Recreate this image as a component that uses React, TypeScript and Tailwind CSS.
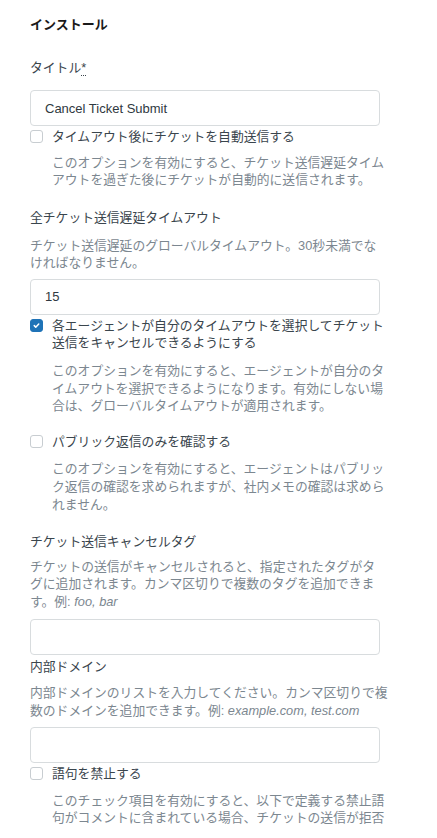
import { useState } from 'react';

const font = 'font-["Liberation_Sans","Noto_Sans_CJK_JP",sans-serif]';

function Hint({ lines, className = '' }: { lines: React.ReactNode[]; className?: string }) {
  return (
    <p className={`text-[12.8px] leading-[17.6px] text-[#7c8790] whitespace-nowrap ${className}`}>
      {lines.map((l, i) => (
        <span key={i} className="block">{l}</span>
      ))}
    </p>
  );
}

function Checkbox({ checked, onChange, lines, className = '' }: { checked: boolean; onChange: () => void; lines: string[]; className?: string }) {
  return (
    <label className={`flex items-start gap-[9px] cursor-pointer ${className}`}>
      <span
        onClick={onChange}
        className={`mt-[2px] w-[13px] h-[13px] rounded-[3px] flex items-center justify-center flex-shrink-0 ${checked ? 'bg-[#1f73b7] border border-[#1f73b7]' : 'bg-white border border-[#c8cdd1]'}`}
      >
        {checked && (
          <svg width="9" height="9" viewBox="0 0 12 12" fill="none">
            <path d="M3 6.2l2 2L9 4" stroke="white" strokeWidth="2" strokeLinecap="round" strokeLinejoin="round" />
          </svg>
        )}
      </span>
      <span className="text-[12.8px] leading-[17.6px] text-[#3a454d] whitespace-nowrap">
        {lines.map((l, i) => (
          <span key={i} className="block">{l}</span>
        ))}
      </span>
    </label>
  );
}

function TextInput({ value, onChange, className = '' }: { value: string; onChange: (v: string) => void; className?: string }) {
  return (
    <input
      type="text"
      value={value}
      onChange={(e) => onChange(e.target.value)}
      className={`block w-[350px] h-[36px] px-[14px] border border-[#d8dcde] rounded-[4px] bg-white text-[13px] text-[#2f3941] focus:outline-none ${className}`}
    />
  );
}

export default function App() {
  const [title, setTitle] = useState('Cancel Ticket Submit');
  const [timeout, setTimeout_] = useState('15');
  const [tags, setTags] = useState('');
  const [domains, setDomains] = useState('');
  const [autoSubmit, setAutoSubmit] = useState(false);
  const [agentTimeout, setAgentTimeout] = useState(true);
  const [publicOnly, setPublicOnly] = useState(false);
  const [banWords, setBanWords] = useState(false);

  return (
    <div className={`h-screen overflow-hidden bg-white pl-[30px] pt-[16px] ${font}`}>
      {/* Header */}
      <h2 className="text-[13px] leading-[17.6px] font-bold text-[#1a1a1a]">インストール</h2>

      {/* Title */}
      <p className="mt-[25px] text-[12.8px] leading-[17.6px] text-[#3a454d]">
        タイトル<abbr title="必須" className="no-underline border-b border-dotted border-[#3a454d]">*</abbr>
      </p>
      <TextInput value={title} onChange={setTitle} className="mt-[14px]" />

      <Checkbox
        checked={autoSubmit}
        onChange={() => setAutoSubmit(!autoSubmit)}
        lines={['タイムアウト後にチケットを自動送信する']}
        className="mt-[2px]"
      />
      <Hint
        className="pl-[22px] mt-[8px]"
        lines={['このオプションを有効にすると、チケット送信遅延タイム', 'アウトを過ぎた後にチケットが自動的に送信されます。']}
      />

      {/* Global timeout */}
      <p className="mt-[20px] text-[12.8px] leading-[17.6px] text-[#3a454d]">全チケット送信遅延タイムアウト</p>
      <Hint
        className="mt-[10px]"
        lines={['チケット送信遅延のグローバルタイムアウト。30秒未満でな', 'ければなりません。']}
      />
      <TextInput value={timeout} onChange={setTimeout_} className="mt-[7px]" />

      <Checkbox
        checked={agentTimeout}
        onChange={() => setAgentTimeout(!agentTimeout)}
        lines={['各エージェントが自分のタイムアウトを選択してチケット', '送信をキャンセルできるようにする']}
        className="mt-[2px]"
      />
      <Hint
        className="pl-[22px] mt-[10px]"
        lines={[
          'このオプションを有効にすると、エージェントが自分のタ',
          'イムアウトを選択できるようになります。有効にしない場',
          '合は、グローバルタイムアウトが適用されます。',
        ]}
      />

      <Checkbox
        checked={publicOnly}
        onChange={() => setPublicOnly(!publicOnly)}
        lines={['パブリック返信のみを確認する']}
        className="mt-[18px]"
      />
      <Hint
        className="pl-[22px] mt-[10px]"
        lines={[
          'このオプションを有効にすると、エージェントはパブリッ',
          'ク返信の確認を求められますが、社内メモの確認は求めら',
          'れません。',
        ]}
      />

      {/* Cancel tags */}
      <p className="mt-[20px] text-[12.8px] leading-[17.6px] text-[#3a454d]">チケット送信キャンセルタグ</p>
      <Hint
        className="mt-[7px]"
        lines={[
          'チケットの送信がキャンセルされると、指定されたタグがタ',
          'グに追加されます。カンマ区切りで複数のタグを追加できま',
          <>す。例: <em>foo, bar</em></>,
        ]}
      />
      <TextInput value={tags} onChange={setTags} className="mt-[9px]" />

      {/* Internal domains */}
      <p className="mt-[3px] text-[12.8px] leading-[17.6px] text-[#3a454d]">内部ドメイン</p>
      <Hint
        className="mt-[8px]"
        lines={[
          '内部ドメインのリストを入力してください。カンマ区切りで複',
          <>数のドメインを追加できます。例: <em>example.com, test.com</em></>,
        ]}
      />
      <TextInput value={domains} onChange={setDomains} className="mt-[8px]" />

      <Checkbox
        checked={banWords}
        onChange={() => setBanWords(!banWords)}
        lines={['語句を禁止する']}
        className="mt-[2px]"
      />
      <Hint
        className="pl-[22px] mt-[9px]"
        lines={[
          'このチェック項目を有効にすると、以下で定義する禁止語',
          '句がコメントに含まれている場合、チケットの送信が拒否',
        ]}
      />
    </div>
  );
}
